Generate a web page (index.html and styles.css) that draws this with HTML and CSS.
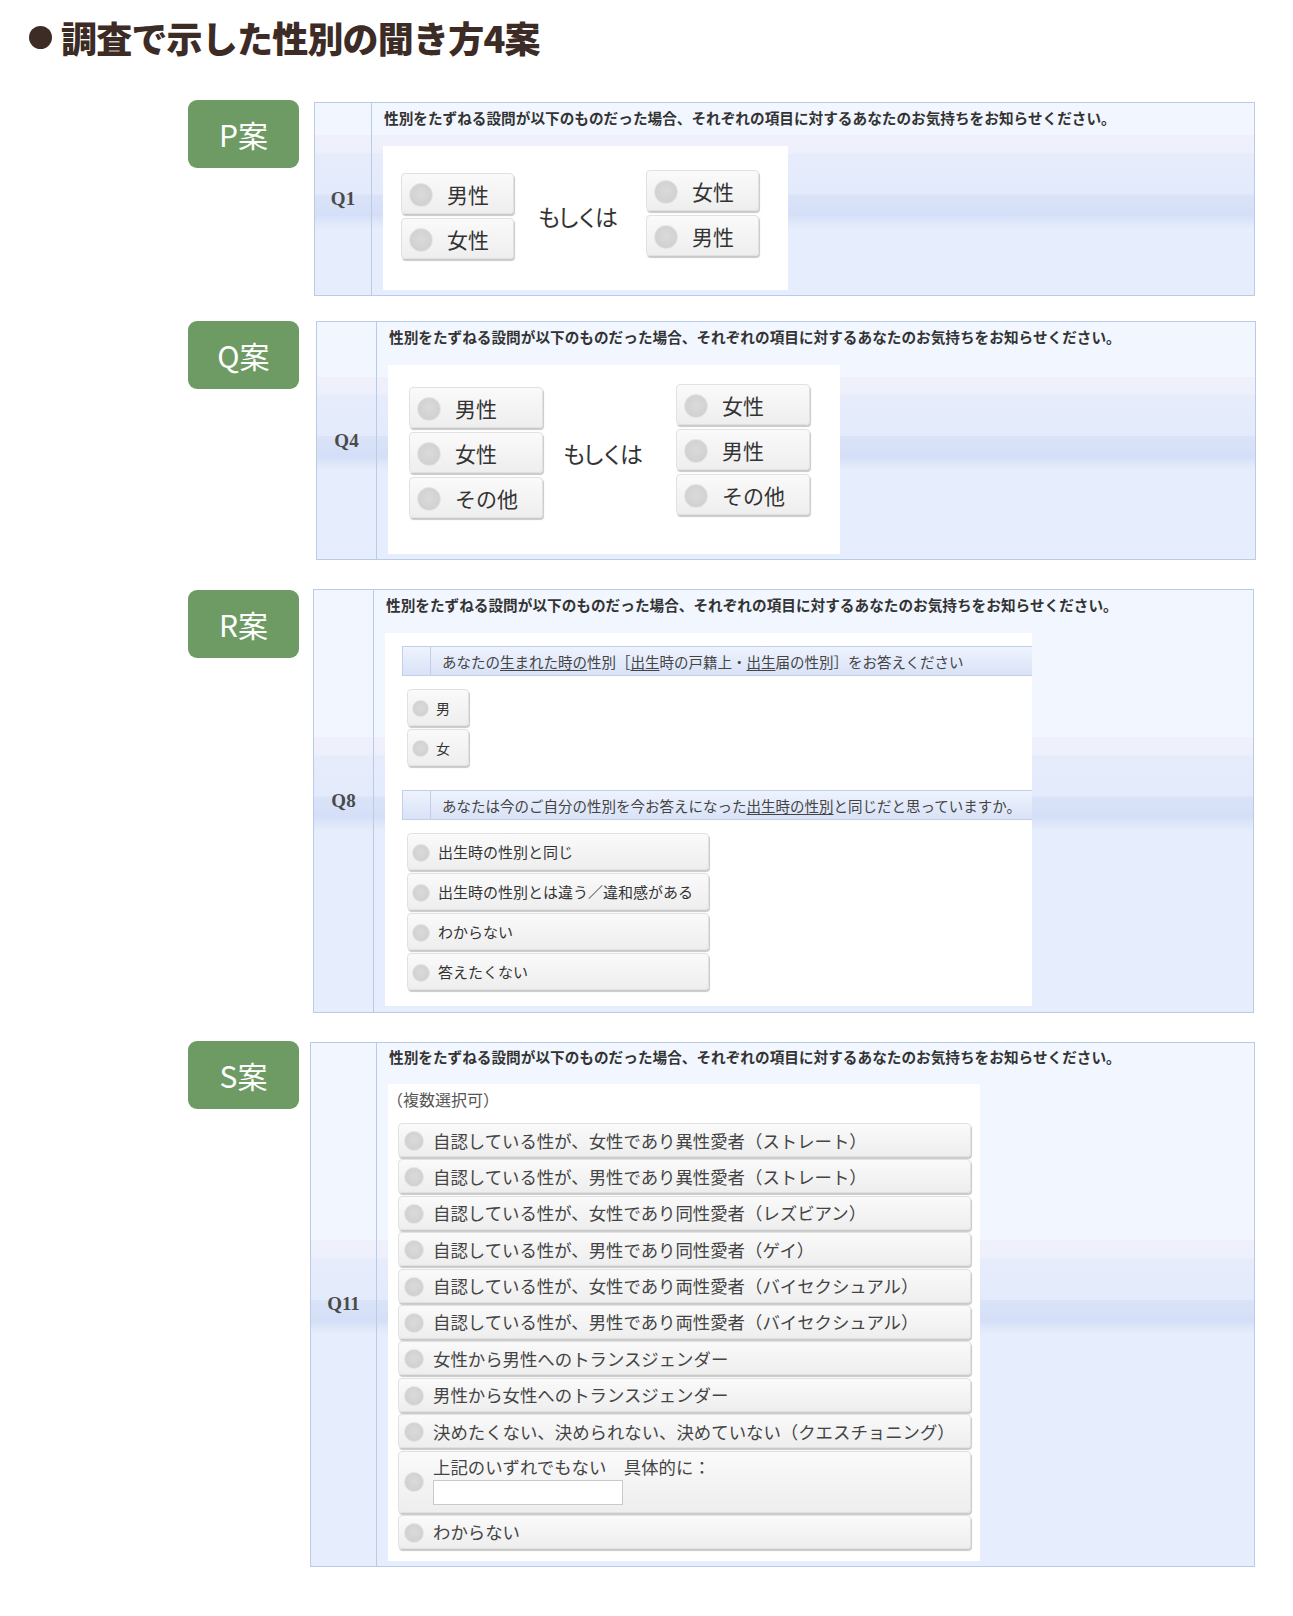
FILE: index.html
```html
<!DOCTYPE html>
<html lang="ja">
<head>
<meta charset="utf-8">
<title>調査で示した性別の聞き方4案</title>
<link rel="stylesheet" href="styles.css">
</head>
<body>
<main class="page">
  <h1 class="title"><span class="dot"></span>調査で示した性別の聞き方4案</h1>

  <section class="plan plan-p">
    <div class="badge">P案</div>
    <div class="panel">
      <div class="qcol">Q1</div>
      <div class="qbody">
        <p class="qtext">性別をたずねる設問が以下のものだった場合、それぞれの項目に対するあなたのお気持ちをお知らせください。</p>
        <div class="box box-p">
          <div class="stack">
            <div class="opt opt-lg"><span class="radio"></span>男性</div>
            <div class="opt opt-lg"><span class="radio"></span>女性</div>
          </div>
          <div class="or">もしくは</div>
          <div class="stack stack-up">
            <div class="opt opt-lg"><span class="radio"></span>女性</div>
            <div class="opt opt-lg"><span class="radio"></span>男性</div>
          </div>
        </div>
      </div>
    </div>
  </section>

  <section class="plan plan-q">
    <div class="badge">Q案</div>
    <div class="panel">
      <div class="qcol">Q4</div>
      <div class="qbody">
        <p class="qtext">性別をたずねる設問が以下のものだった場合、それぞれの項目に対するあなたのお気持ちをお知らせください。</p>
        <div class="box box-q">
          <div class="stack">
            <div class="opt opt-lg"><span class="radio"></span>男性</div>
            <div class="opt opt-lg"><span class="radio"></span>女性</div>
            <div class="opt opt-lg"><span class="radio"></span>その他</div>
          </div>
          <div class="or">もしくは</div>
          <div class="stack stack-up">
            <div class="opt opt-lg"><span class="radio"></span>女性</div>
            <div class="opt opt-lg"><span class="radio"></span>男性</div>
            <div class="opt opt-lg"><span class="radio"></span>その他</div>
          </div>
        </div>
      </div>
    </div>
  </section>

  <section class="plan plan-r">
    <div class="badge">R案</div>
    <div class="panel">
      <div class="qcol">Q8</div>
      <div class="qbody">
        <p class="qtext">性別をたずねる設問が以下のものだった場合、それぞれの項目に対するあなたのお気持ちをお知らせください。</p>
        <div class="box box-r">
          <div class="bar"><span class="bar-cell"></span><span>あなたの<u>生まれた時の</u>性別［<u>出生</u>時の戸籍上・<u>出生</u>届の性別］をお答えください</span></div>
          <div class="stack stack-sm">
            <div class="opt opt-sm"><span class="radio"></span>男</div>
            <div class="opt opt-sm"><span class="radio"></span>女</div>
          </div>
          <div class="bar"><span class="bar-cell"></span><span>あなたは今のご自分の性別を今お答えになった<u>出生時の性別</u>と同じだと思っていますか。</span></div>
          <div class="stack stack-md">
            <div class="opt opt-md"><span class="radio"></span>出生時の性別と同じ</div>
            <div class="opt opt-md"><span class="radio"></span>出生時の性別とは違う／違和感がある</div>
            <div class="opt opt-md"><span class="radio"></span>わからない</div>
            <div class="opt opt-md"><span class="radio"></span>答えたくない</div>
          </div>
        </div>
      </div>
    </div>
  </section>

  <section class="plan plan-s">
    <div class="badge">S案</div>
    <div class="panel">
      <div class="qcol">Q11</div>
      <div class="qbody">
        <p class="qtext">性別をたずねる設問が以下のものだった場合、それぞれの項目に対するあなたのお気持ちをお知らせください。</p>
        <div class="box box-s">
          <p class="note">（複数選択可）</p>
          <div class="stack stack-row">
            <div class="opt opt-row"><span class="radio"></span>自認している性が、女性であり異性愛者（ストレート）</div>
            <div class="opt opt-row"><span class="radio"></span>自認している性が、男性であり異性愛者（ストレート）</div>
            <div class="opt opt-row"><span class="radio"></span>自認している性が、女性であり同性愛者（レズビアン）</div>
            <div class="opt opt-row"><span class="radio"></span>自認している性が、男性であり同性愛者（ゲイ）</div>
            <div class="opt opt-row"><span class="radio"></span>自認している性が、女性であり両性愛者（バイセクシュアル）</div>
            <div class="opt opt-row"><span class="radio"></span>自認している性が、男性であり両性愛者（バイセクシュアル）</div>
            <div class="opt opt-row"><span class="radio"></span>女性から男性へのトランスジェンダー</div>
            <div class="opt opt-row"><span class="radio"></span>男性から女性へのトランスジェンダー</div>
            <div class="opt opt-row"><span class="radio"></span>決めたくない、決められない、決めていない（クエスチョニング）</div>
            <div class="opt opt-row opt-tall"><span class="radio"></span>
              <div class="tall-body">
                <span class="tall-text">上記のいずれでもない　具体的に：</span>
                <span class="textbox"></span>
              </div>
            </div>
            <div class="opt opt-row"><span class="radio"></span>わからない</div>
          </div>
        </div>
      </div>
    </div>
  </section>
</main>
</body>
</html>
```

FILE: styles.css
```css
* {
  box-sizing: border-box;
}

body {
  margin: 0;
  background: #ffffff;
  font-family: "Noto Sans CJK JP", sans-serif;
  color: #333333;
}

.page {
  width: 1293px;
  padding: 12px 0 40px;
}

/* ---------- title ---------- */
.title {
  margin: 0 0 0 29px;
  height: 50px;
  display: flex;
  align-items: center;
  font-size: 36px;
  line-height: 50px;
  font-weight: 900;
  letter-spacing: -0.8px;
  color: #3d2b26;
}

.dot {
  width: 23px;
  height: 23px;
  border-radius: 50%;
  background: #3d2b26;
  margin-right: 9px;
  flex: none;
}

/* ---------- plan rows ---------- */
.plan {
  display: flex;
  align-items: flex-start;
  margin-left: 188px;
}

.plan-p { margin-top: 38px; }
.plan-q { margin-top: 25px; }
.plan-r { margin-top: 29px; }
.plan-s { margin-top: 28px; }

.badge {
  flex: none;
  width: 111px;
  height: 68px;
  border-radius: 9px;
  background: #6d9b63;
  color: #ffffff;
  font-size: 30px;
  line-height: 68px;
  text-align: center;
}

.plan-r .badge { margin-top: 1px; }

/* ---------- panel ---------- */
.panel {
  display: grid;
  border: 1px solid #b9cbe7;
  background: linear-gradient(to bottom,
    #f1f6ff 0,
    #f1f6ff calc(50% - 64px),
    #eff0fb calc(50% - 64px),
    #edf0fb calc(50% - 46px),
    #e6ecfb calc(50% - 45px),
    #e3eafb calc(50% - 5px),
    #dae3f8 calc(50% - 4px),
    #d4dff7 calc(50% + 16px),
    #dde6f9 calc(50% + 22px),
    #e6edfc calc(50% + 30px),
    #e6edfc 100%);
}

.plan-p .panel { margin: 2px 0 0 15px; width: 941px; grid-template-columns: 57px 1fr; }
.plan-q .panel { margin: 0 0 0 17px; width: 940px; grid-template-columns: 60px 1fr; }
.plan-r .panel { margin: 0 0 0 14px; width: 941px; grid-template-columns: 60px 1fr; }
.plan-s .panel { margin: 1px 0 0 11px; width: 945px; grid-template-columns: 66px 1fr; }

.qcol {
  border-right: 1px solid #b9cbe7;
  display: flex;
  align-items: center;
  justify-content: center;
  font-family: "Liberation Serif", serif;
  font-weight: bold;
  font-size: 19px;
  color: #4a4a4a;
}

.qbody {
  min-width: 0;
}

.qtext {
  margin: 0;
  height: 43px;
  padding: 6px 0 0 12px;
  font-size: 14.65px;
  line-height: 18px;
  font-weight: 700;
  color: #333333;
  white-space: nowrap;
}

.plan-s .qtext {
  height: 41px;
  padding-top: 5px;
}

.box {
  background: #ffffff;
  margin: 0 0 5px 11px;
}

/* ---------- options ---------- */
.stack {
  display: flex;
  flex-direction: column;
  gap: 4px;
}

.stack-up {
  margin-top: -3px;
}

.opt {
  display: flex;
  align-items: center;
  background: linear-gradient(#fafafa, #eeeeee);
  border: 1px solid #e1e1e1;
  border-radius: 4px;
  box-shadow: 1px 2px 1px #c9c9c9;
  color: #333333;
  white-space: nowrap;
}

.radio {
  flex: none;
  margin-top: 2px;
  border-radius: 50%;
  background: radial-gradient(circle at 50% 45%, #dadada, #cdcdcd);
  border: 1px solid #e4e4e4;
}

.opt-lg {
  width: 113px;
  height: 41px;
  padding-left: 7px;
  font-size: 21px;
}

.opt-lg .radio {
  width: 24px;
  height: 24px;
  margin-right: 14px;
}

.box-q .opt-lg {
  width: 134px;
}

.or {
  align-self: center;
  width: 74px;
  font-size: 23px;
  letter-spacing: -4px;
  white-space: nowrap;
  color: #333333;
}

.box-p {
  display: flex;
  width: 405px;
  padding: 27px 29px 31px 18px;
}

.box-p .or { margin: 0 34px 0 24px; }

.box-q {
  display: flex;
  width: 452px;
  padding: 22px 29px 36px 21px;
}

.box-q .or { margin: 0 39px 0 20px; }

/* ---------- R ---------- */
.box-r {
  width: 647px;
  padding: 13px 0 16px 17px;
  margin-bottom: 6px;
}

.bar {
  height: 30px;
  display: flex;
  align-items: center;
  border: 1px solid #c2cfeb;
  border-right: none;
  background: linear-gradient(#eef3fd, #d9e2f7);
  font-size: 14.5px;
  color: #444444;
  white-space: nowrap;
  margin-bottom: 13px;
}

.bar-cell {
  width: 28px;
  height: 100%;
  border-right: 1px solid #c2cfeb;
  margin-right: 11px;
}

.bar u {
  text-underline-offset: 2px;
}

.stack-sm {
  gap: 3px;
  margin: 0 0 24px 5px;
}

.opt-sm {
  width: 62px;
  height: 37px;
  padding-left: 4px;
  font-size: 14px;
}

.opt-sm .radio {
  width: 17px;
  height: 17px;
  margin-right: 7px;
}

.stack-md {
  gap: 3px;
  margin-left: 5px;
}

.opt-md {
  width: 302px;
  height: 37px;
  padding-left: 4px;
  font-size: 15px;
}

.opt-md .radio {
  width: 18px;
  height: 18px;
  margin-right: 8px;
}

/* ---------- S ---------- */
.box-s {
  width: 592px;
  padding: 5px 9px 12px 10px;
}

.note {
  margin: 0 0 14px -11px;
  font-size: 16px;
  line-height: 20px;
  color: #555555;
}

.stack-row {
  gap: 2.4px;
}

.opt-row {
  height: 34px;
  padding-left: 5px;
  font-size: 17.4px;
  color: #444444;
}

.opt-row .radio {
  width: 20px;
  height: 20px;
  margin-right: 9px;
}

.opt-tall {
  height: 62px;
}

.opt-tall .radio {
  margin-top: 0;
}

.tall-body {
  display: flex;
  flex-direction: column;
  align-self: flex-start;
  padding-top: 4px;
}

.tall-text {
  line-height: 22px;
}

.textbox {
  display: block;
  width: 190px;
  height: 25px;
  margin-top: 2px;
  background: #ffffff;
  border: 1px solid #c9c9c9;
}
```
